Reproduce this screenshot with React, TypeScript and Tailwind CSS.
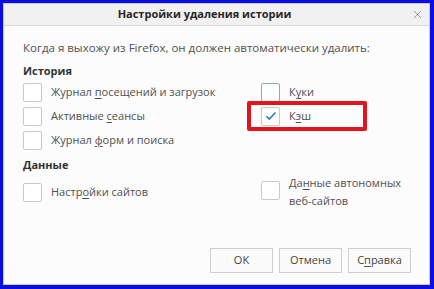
import { X } from 'lucide-react'

const font = { fontFamily: '"Open Sans", "Noto Sans", sans-serif' }

function Box({ checked, focus }: { checked?: boolean; focus?: boolean }) {
  return (
    <div
      className={
        'w-[19px] h-[19px] shrink-0 rounded-[2px] border bg-white flex items-center justify-center ' +
        (focus ? 'border-[#7fa9d8]' : 'border-[#c9c9c9]')
      }
    >
      {checked && (
        <svg width="12" height="10" viewBox="0 0 12 10" fill="none">
          <path d="M1.5 5.2 L4.3 8 L10.5 1.5" stroke="#2b7cc4" strokeWidth="1.6" />
        </svg>
      )}
    </div>
  )
}

function Row({ children, checked, focus }: { children: React.ReactNode; checked?: boolean; focus?: boolean }) {
  return (
    <div className="h-[24px] flex items-center gap-[9px]">
      <Box checked={checked} focus={focus} />
      <span className="text-[11px] text-[#505050] leading-[16px]">{children}</span>
    </div>
  )
}

const U = ({ c }: { c: string }) => <span className="underline underline-offset-2 decoration-[#505050]">{c}</span>

function Button({ children }: { children: React.ReactNode }) {
  return (
    <div className="w-[63px] h-[25px] border border-[#cfcfcf] bg-[#fbfbfb] flex items-center justify-center text-[11px] text-[#444]">
      {children}
    </div>
  )
}

export default function App() {
  return (
    <div className="w-[434px] h-[289px] bg-[#0c0ce6] pt-[3px] pl-[3px] pr-[4px] pb-[4px]" style={font}>
      <div className="h-full border border-[#cdcdcd] bg-[#fcfcfd] flex flex-col relative">
        {/* Title bar */}
        <div className="h-[22px] shrink-0 bg-[#f1f1f1] border-b border-[#d8d8d8] flex items-center justify-center pr-[24px] relative">
          <span className="text-[11px] font-bold text-[#262626]">Настройки удаления истории</span>
          <X className="absolute right-[5px] top-[4px] w-[13px] h-[13px] text-[#6a6a6a]" strokeWidth={1.2} />
        </div>

        {/* Body */}
        <div className="flex-1 flex flex-col pl-[19px] pr-[18px]">
          <div className="mt-[14px] h-[16px] leading-[16px] text-[11.5px] text-[#505050]">
            Когда я выхожу из Firefox, он должен автоматически удалить:
          </div>
          <div className="mt-[7px] h-[16px] leading-[16px] text-[11px] font-bold text-[#333]">История</div>
          <div className="mt-[1px] grid grid-cols-[238px_1fr]">
            <div className="flex flex-col">
              <Row>Журнал <U c="п" />осещений и загрузок</Row>
              <Row>Активные <U c="с" />еансы</Row>
              <Row>Журнал <U c="ф" />орм и поиска</Row>
            </div>
            <div className="flex flex-col">
              <Row focus>К<U c="у" />ки</Row>
              <Row checked>К<U c="э" />ш</Row>
            </div>
          </div>
          <div className="mt-[5px] h-[16px] leading-[16px] text-[11px] font-bold text-[#333]">Данные</div>
          <div className="mt-[1px] grid grid-cols-[238px_1fr]">
            <div className="h-[36px] flex items-center gap-[9px]">
              <Box />
              <span className="text-[11px] text-[#505050] leading-[16px]">Настр<U c="о" />йки сайтов</span>
            </div>
            <div className="h-[36px] flex items-start gap-[9px]">
              <div className="mt-[7px]"><Box /></div>
              <span className="text-[11px] text-[#505050] leading-[18px]">
                Да<U c="н" />ные автономных
                <br />
                веб-сайтов
              </span>
            </div>
          </div>

          <div className="mt-auto mb-[11px] flex justify-end gap-[6px]">
            <Button>OK</Button>
            <Button>Отмена</Button>
            <Button>С<U c="п" />равка</Button>
          </div>
        </div>

        {/* annotation */}
        <div className="absolute left-[243px] top-[97px] w-[120px] h-[30px] border-[4px] border-[#e5141c] rounded-[2px]" />
      </div>
    </div>
  )
}
